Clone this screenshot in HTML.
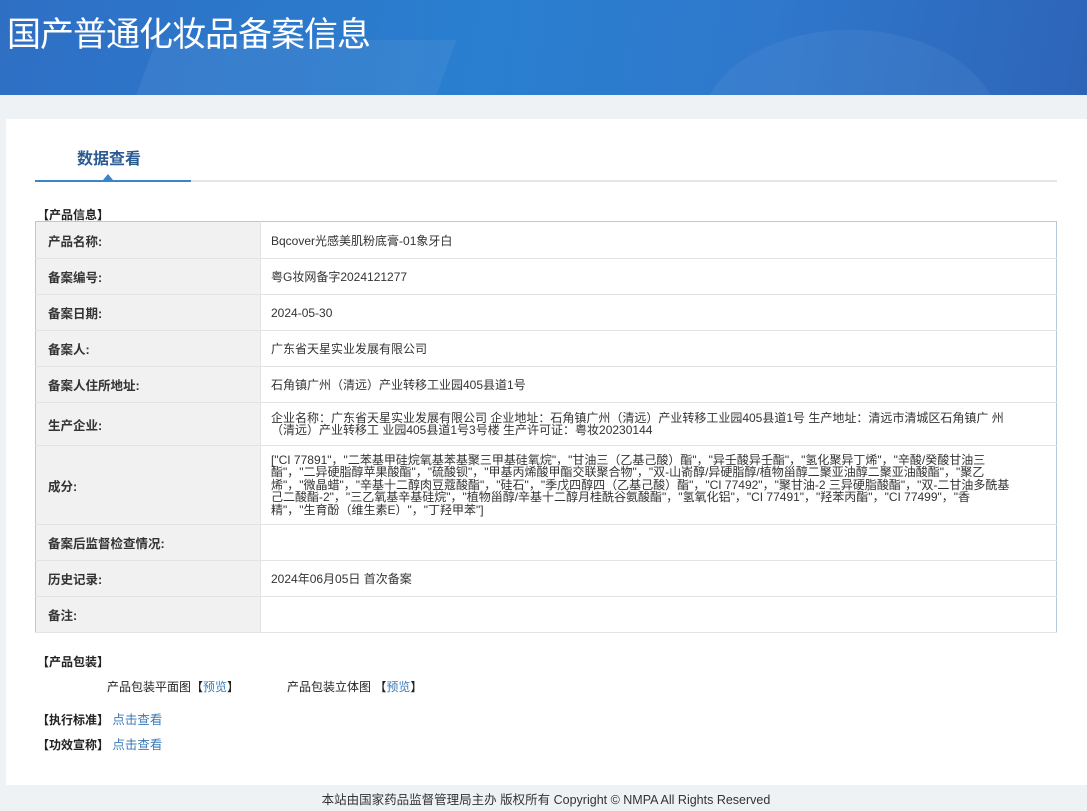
<!DOCTYPE html>
<html><head><meta charset="utf-8"><style>
*{margin:0;padding:0;box-sizing:border-box}
body{width:1087px;height:811px;overflow:hidden;background:#eef2f5;font-family:"Liberation Sans","Noto Sans CJK SC",sans-serif;font-size:12px;color:#333;position:relative}
.hd{position:absolute;left:0;top:0;width:1087px;height:95px;background:linear-gradient(100deg,#2e6fc4 0%,#2a7fd0 45%,#2f78cc 70%,#2d64b8 100%);overflow:hidden}
.hd .c1{position:absolute;left:120px;top:40px;width:300px;height:200px;background:rgba(255,255,255,.06);transform:skewX(-20deg)}
.hd .c2{position:absolute;left:700px;top:30px;width:300px;height:200px;border-radius:50%;background:rgba(255,255,255,.05)}
.hd h1{position:absolute;left:7px;top:7px;color:#fff;font-size:34px;font-weight:normal;letter-spacing:-1px;font-family:"Noto Sans CJK SC",sans-serif}
.card{position:absolute;left:6px;top:119px;width:1081px;height:666px;background:#fff}
.tab{position:absolute;left:77px;top:145px;color:#2b5b93;font-size:16px;font-weight:bold}
.line{position:absolute;left:35px;top:180px;width:1022px;height:2px;background:#e3e5e8}
.line b{position:absolute;left:0;top:0;width:156px;height:2px;background:#3a86cc}
.tri{position:absolute;left:103px;top:174px;width:0;height:0;border-left:5px solid transparent;border-right:5px solid transparent;border-bottom:6px solid #3a86cc}
.sec{position:absolute;left:37px;font-weight:bold;font-size:12px;color:#222}
table{position:absolute;left:35px;top:221px;width:1022px;border-collapse:collapse;border:1px solid #b5c9de}
td{border-bottom:1px solid #e3e3e3;vertical-align:middle}
td.l{width:225px;background:#f1f1f1;font-weight:bold;padding-left:12px;font-size:12.5px;color:#333;border-right:1px solid #e3e3e3}
td.v{padding-left:10px;font-size:12px;color:#333}
.sm{line-height:12.5px;padding-right:45px}
.t{position:absolute;font-size:12px;color:#222}
a{color:#3b7ab8;text-decoration:none}
.ft{position:absolute;left:0;top:789px;width:1087px;text-align:center;font-size:12.5px;color:#333;padding-left:5px}
</style></head><body>
<div class="hd"><div class="c1"></div><div class="c2"></div><h1>国产普通化妆品备案信息</h1></div>
<div class="card"></div>
<div class="tab">数据查看</div>
<div class="line"><b></b></div><div class="tri"></div>
<div class="sec" style="top:206px">【产品信息】</div>
<table>
<tr style="height:37px"><td class="l">产品名称:</td><td class="v">Bqcover光感美肌粉底膏-01象牙白</td></tr>
<tr style="height:36px"><td class="l">备案编号:</td><td class="v">粤G妆网备字2024121277</td></tr>
<tr style="height:36px"><td class="l">备案日期:</td><td class="v">2024-05-30</td></tr>
<tr style="height:36px"><td class="l">备案人:</td><td class="v">广东省天星实业发展有限公司</td></tr>
<tr style="height:36px"><td class="l">备案人住所地址:</td><td class="v">石角镇广州（清远）产业转移工业园405县道1号</td></tr>
<tr style="height:43px"><td class="l">生产企业:</td><td class="v sm">企业名称：广东省天星实业发展有限公司 企业地址：石角镇广州（清远）产业转移工业园405县道1号 生产地址：清远市清城区石角镇广 州（清远）产业转移工 业园405县道1号3号楼 生产许可证：粤妆20230144</td></tr>
<tr style="height:79px"><td class="l">成分:</td><td class="v sm">["CI 77891"，"二苯基甲硅烷氧基苯基聚三甲基硅氧烷"，"甘油三（乙基己酸）酯"，"异壬酸异壬酯"，"氢化聚异丁烯"，"辛酸/癸酸甘油三酯"，"二异硬脂醇苹果酸酯"，"硫酸钡"，"甲基丙烯酸甲酯交联聚合物"，"双-山嵛醇/异硬脂醇/植物甾醇二聚亚油醇二聚亚油酸酯"，"聚乙烯"，"微晶蜡"，"辛基十二醇肉豆蔻酸酯"，"硅石"，"季戊四醇四（乙基己酸）酯"，"CI 77492"，"聚甘油-2 三异硬脂酸酯"，"双-二甘油多酰基己二酸酯-2"，"三乙氧基辛基硅烷"，"植物甾醇/辛基十二醇月桂酰谷氨酸酯"，"氢氧化铝"，"CI 77491"，"羟苯丙酯"，"CI 77499"，"香精"，"生育酚（维生素E）"，"丁羟甲苯"]</td></tr>
<tr style="height:36px"><td class="l">备案后监督检查情况:</td><td class="v"></td></tr>
<tr style="height:36px"><td class="l">历史记录:</td><td class="v">2024年06月05日 首次备案</td></tr>
<tr style="height:36px"><td class="l">备注:</td><td class="v"></td></tr>
</table>
<div class="sec" style="top:653px">【产品包装】</div>
<div class="t" style="left:107px;top:678px">产品包装平面图【<a>预览</a>】</div>
<div class="t" style="left:287px;top:678px">产品包装立体图 【<a>预览</a>】</div>
<div class="sec" style="top:709px">【执行标准】 <a style="font-weight:normal;font-size:12.5px">点击查看</a></div>
<div class="sec" style="top:734px">【功效宣称】 <a style="font-weight:normal;font-size:12.5px">点击查看</a></div>
<div class="ft">本站由国家药品监督管理局主办 版权所有 Copyright © NMPA All Rights Reserved</div>
</body></html>
